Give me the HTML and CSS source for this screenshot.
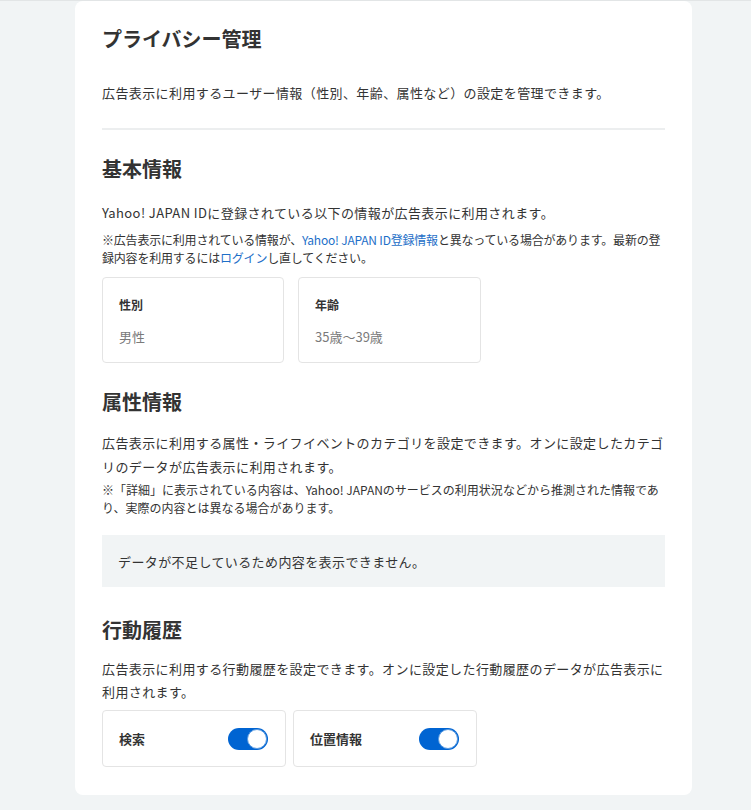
FILE: index.html
```html
<!DOCTYPE html>
<html lang="ja">
<head>
<meta charset="utf-8">
<title>プライバシー管理</title>
<link rel="stylesheet" href="styles.css">
</head>
<body>
<div class="page">
  <main class="card">
    <h1 class="title">プライバシー管理</h1>
    <p class="lead">広告表示に利用するユーザー情報（性別、年齢、属性など）の設定を管理できます。</p>
    <hr class="divider">

    <section class="section section-basic">
      <h2 class="heading">基本情報</h2>
      <p class="text text-basic">Yahoo! JAPAN IDに登録されている以下の情報が広告表示に利用されます。</p>
      <p class="note note-basic">※広告表示に利用されている情報が、<a class="link" href="#">Yahoo! JAPAN ID登録情報</a>と異なっている場合があります。最新の登録内容を利用するには<a class="link" href="#">ログイン</a>し直してください。</p>
      <div class="info-grid">
        <div class="info-box">
          <div class="info-label">性別</div>
          <div class="info-value">男性</div>
        </div>
        <div class="info-box">
          <div class="info-label">年齢</div>
          <div class="info-value">35歳～39歳</div>
        </div>
      </div>
    </section>

    <section class="section section-attr">
      <h2 class="heading">属性情報</h2>
      <p class="text text-attr">広告表示に利用する属性・ライフイベントのカテゴリを設定できます。オンに設定したカテゴリのデータが広告表示に利用されます。</p>
      <p class="note note-attr">※「詳細」に表示されている内容は、Yahoo! JAPANのサービスの利用状況などから推測された情報であり、実際の内容とは異なる場合があります。</p>
      <div class="empty">データが不足しているため内容を表示できません。</div>
    </section>

    <section class="section section-history">
      <h2 class="heading">行動履歴</h2>
      <p class="text text-history">広告表示に利用する行動履歴を設定できます。オンに設定した行動履歴のデータが広告表示に利用されます。</p>
      <div class="toggle-grid">
        <div class="toggle-box">
          <span class="toggle-label">検索</span>
          <span class="switch" role="switch" aria-checked="true"><span class="knob"></span></span>
        </div>
        <div class="toggle-box">
          <span class="toggle-label">位置情報</span>
          <span class="switch" role="switch" aria-checked="true"><span class="knob"></span></span>
        </div>
      </div>
    </section>
  </main>
</div>
</body>
</html>
```
FILE: styles.css
```css
html, body {
  margin: 0;
  padding: 0;
}
body {
  background: #f1f4f5;
  font-family: "Noto Sans CJK JP", "Noto Sans", sans-serif;
  color: #333;
  border-top: 1px solid #e2e5e6;
}
.page {
  padding-left: 75px;
}
.card {
  width: 617px;
  box-sizing: border-box;
  background: #fff;
  border-radius: 8px;
  padding: 23px 27px 28px;
}
.title {
  margin: 0;
  font-size: 20px;
  line-height: 30px;
  font-weight: 700;
}
.lead {
  margin: 28px 0 0;
  font-size: 13px;
  line-height: 22px;
  letter-spacing: 0.4px;
}
.divider {
  margin: 24px 0 0;
  border: 0;
  height: 2px;
  background: #eceeef;
}
.heading {
  margin: 0;
  font-size: 20px;
  line-height: 28px;
  font-weight: 700;
}
.section-basic { margin-top: 25px; }
.section-attr { margin-top: 25px; }
.section-history { margin-top: 29px; }
.text {
  margin: 0;
  font-size: 13px;
  line-height: 24px;
  letter-spacing: 0.4px;
}
.text-basic { margin-top: 18px; }
.text-attr { margin-top: 15px; }
.text-history { margin-top: 13px; line-height: 23px; }
.note {
  margin: 0;
  font-size: 12px;
  line-height: 18px;
  letter-spacing: 0;
}
.note-basic { margin-top: 6px; letter-spacing: -0.2px; }
.note-attr { margin-top: 2px; }
.link {
  color: #1e6fc8;
  text-decoration: none;
}
.info-grid {
  margin-top: 10px;
  display: grid;
  grid-template-columns: 182px 183px;
  gap: 14px;
}
.info-box {
  border: 1px solid #e4e4e4;
  border-radius: 4px;
  height: 86px;
  box-sizing: border-box;
  padding: 17px 16px 0;
}
.info-label {
  font-size: 12px;
  line-height: 20px;
  font-weight: 700;
}
.info-value {
  margin-top: 12px;
  font-size: 13px;
  line-height: 20px;
  color: #7a7a7a;
}
.empty {
  margin-top: 18px;
  background: #f1f4f5;
  height: 52px;
  display: flex;
  align-items: center;
  padding-left: 16px;
  font-size: 13px;
  letter-spacing: 0.4px;
}
.toggle-grid {
  margin-top: 7px;
  display: grid;
  grid-template-columns: 184px 184px;
  gap: 7px;
}
.toggle-box {
  border: 1px solid #e4e4e4;
  border-radius: 4px;
  height: 57px;
  box-sizing: border-box;
  display: flex;
  align-items: center;
  justify-content: space-between;
  padding: 0 17px 0 16px;
}
.toggle-label {
  font-size: 13px;
  font-weight: 700;
}
.switch {
  width: 40px;
  height: 22px;
  border-radius: 11px;
  background: #0064d2;
  position: relative;
  display: block;
}
.knob {
  position: absolute;
  right: 1px;
  top: 1px;
  width: 20px;
  height: 20px;
  box-sizing: border-box;
  border-radius: 50%;
  background: #fff;
  border: 1px solid #5b9be0;
}
```
